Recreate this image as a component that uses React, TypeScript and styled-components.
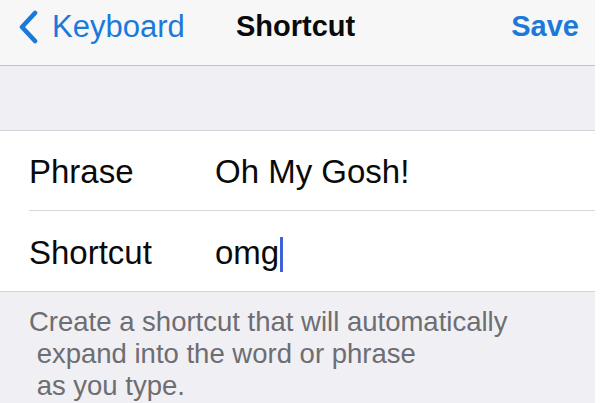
import styled, { createGlobalStyle } from "styled-components";

const GlobalStyle = createGlobalStyle`
  html, body {
    margin: 0;
    padding: 0;
    background: #ffffff;
  }
  body {
    font-family: "Liberation Sans", Arial, sans-serif;
  }
`;

type Field = {
  label: string;
  value: string;
  focused?: boolean;
};

const fields: Field[] = [
  { label: "Phrase", value: "Oh My Gosh!" },
  { label: "Shortcut", value: "omg", focused: true },
];

export default function App() {
  return (
    <>
      <GlobalStyle />
      <Screen>
        <NavBar>
          <BackButton>
            <Chevron viewBox="0 0 22 34">
              <path
                d="M18 3 L5 17 L18 31"
                fill="none"
                stroke="currentColor"
                strokeWidth="4.6"
                strokeLinecap="round"
                strokeLinejoin="round"
              />
            </Chevron>
            <span>Keyboard</span>
          </BackButton>
          <Title>Shortcut</Title>
          <SaveButton>Save</SaveButton>
        </NavBar>
        <Spacer />
        <Group>
          {fields.map((f, i) => (
            <Row key={f.label} $last={i === fields.length - 1}>
              <Label>{f.label}</Label>
              <Value>
                {f.value}
                {f.focused && <Caret />}
              </Value>
            </Row>
          ))}
        </Group>
        <Footer>
          {"Create a shortcut that will automatically\n expand into the word or phrase\n as you type."}
        </Footer>
      </Screen>
    </>
  );
}

const Screen = styled.div`
  width: 595px;
  height: 403px;
  background: #efeff4;
  display: flex;
  flex-direction: column;
  overflow: hidden;
`;

const NavBar = styled.div`
  height: 66px;
  box-sizing: border-box;
  background: #f7f7f8;
  border-bottom: 1px solid #c3c3c8;
  display: flex;
  align-items: flex-start;
  justify-content: space-between;
  padding: 8px 16px 0 17px;
  position: relative;
`;

const BackButton = styled.div`
  display: flex;
  align-items: center;
  gap: 13px;
  color: #1b7ad9;
  font-size: 31px;
  line-height: 37px;
`;

const Chevron = styled.svg`
  width: 22px;
  height: 34px;
  margin-top: 1px;
`;

const Title = styled.div`
  position: absolute;
  left: 236px;
  top: 8px;
  font-size: 29px;
  line-height: 37px;
  font-weight: 700;
  color: #0a0a0a;
`;

const SaveButton = styled.div`
  font-size: 29px;
  line-height: 37px;
  font-weight: 700;
  color: #1b7ad9;
`;

const Spacer = styled.div`
  height: 64px;
  border-bottom: 1px solid #d3d3d8;
`;

const Group = styled.div`
  background: #ffffff;
  border-bottom: 1px solid #d3d3d8;
  padding-left: 29px;
`;

const Row = styled.div<{ $last?: boolean }>`
  height: 80px;
  box-sizing: border-box;
  display: flex;
  align-items: center;
  padding-top: ${(p) => (p.$last ? "4px" : "2px")};
  border-bottom: ${(p) => (p.$last ? "none" : "1px solid #d8d8dc")};
  font-size: 33px;
  color: #0a0a0a;
`;

const Label = styled.div`
  width: 186px;
`;

const Value = styled.div`
  display: flex;
  align-items: center;
`;

const Caret = styled.span`
  display: inline-block;
  width: 3px;
  height: 35px;
  margin-left: 1px;
  margin-top: 2px;
  background: #3f63d6;
`;

const Footer = styled.div`
  padding: 14px 0 0 29px;
  font-size: 27.5px;
  line-height: 32px;
  color: #6d6d72;
  white-space: pre;
`;
